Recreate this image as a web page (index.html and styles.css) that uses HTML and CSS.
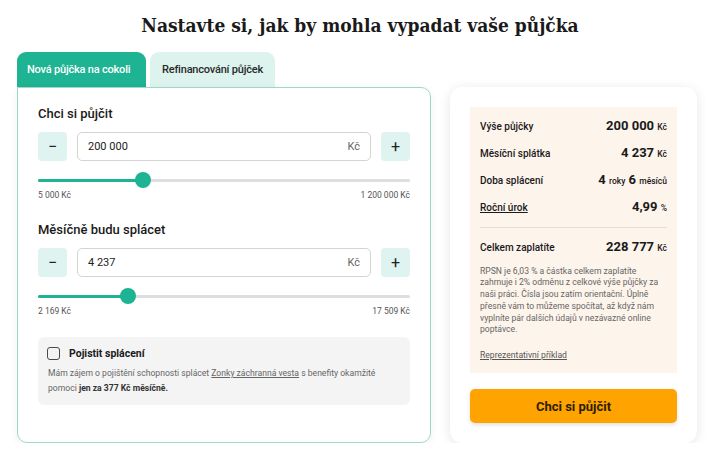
FILE: index.html
```html
<!DOCTYPE html>
<html lang="cs">
<head>
<meta charset="utf-8">
<title>Kalkulačka půjčky</title>
<link rel="stylesheet" href="styles.css">
</head>
<body>
<h1 class="title">Nastavte si, jak by mohla vypadat vaše půjčka</h1>
<div class="layout">
  <div class="tabs">
    <div class="tab tab-active">Nová půjčka na cokoli</div>
    <div class="tab">Refinancování půjček</div>
  </div>
  <div class="calc">
    <div class="field">
      <div class="field-label">Chci si půjčit</div>
      <div class="controls">
        <button class="step">&minus;</button>
        <div class="input"><span>200 000</span><span class="unit">Kč</span></div>
        <button class="step">+</button>
      </div>
      <div class="slider"><div class="track"><div class="fill" style="width:28.3%"></div><div class="thumb" style="left:28.3%"></div></div></div>
      <div class="range"><span>5 000 Kč</span><span>1 200 000 Kč</span></div>
    </div>
    <div class="field">
      <div class="field-label">Měsíčně budu splácet</div>
      <div class="controls">
        <button class="step">&minus;</button>
        <div class="input"><span>4 237</span><span class="unit">Kč</span></div>
        <button class="step">+</button>
      </div>
      <div class="slider"><div class="track"><div class="fill" style="width:24.3%"></div><div class="thumb" style="left:24.3%"></div></div></div>
      <div class="range"><span>2 169 Kč</span><span>17 509 Kč</span></div>
    </div>
    <div class="insure">
      <div class="insure-head"><span class="check"></span><span class="insure-title">Pojistit splácení</span></div>
      <p class="insure-text">Mám zájem o pojištění schopnosti splácet <a href="#">Zonky záchranná vesta</a> s benefity okamžité<br>pomoci <b>jen za 377 Kč měsíčně.</b></p>
    </div>
  </div>
  <div class="summary">
    <div class="sum-box">
      <div class="row"><span class="lbl">Výše půjčky</span><span class="val">200 000 <small>Kč</small></span></div>
      <div class="row"><span class="lbl">Měsíční splátka</span><span class="val">4 237 <small>Kč</small></span></div>
      <div class="row"><span class="lbl">Doba splácení</span><span class="val">4 <small>roky</small> 6 <small>měsíců</small></span></div>
      <div class="row"><span class="lbl lbl-link">Roční úrok</span><span class="val">4,99 <small>%</small></span></div>
      <div class="divider"></div>
      <div class="row"><span class="lbl">Celkem zaplatíte</span><span class="val">228 777 <small>Kč</small></span></div>
      <p class="note">RPSN je 6,03 % a částka celkem zaplatíte zahrnuje i 2% odměnu z celkové výše půjčky za naši práci. Čísla jsou zatím orientační. Úplně přesně vám to můžeme spočítat, až když nám vyplníte pár dalších údajů v nezávazné online poptávce.</p>
      <a class="example" href="#">Reprezentativní příklad</a>
    </div>
    <button class="cta">Chci si půjčit</button>
  </div>
</div>
</body>
</html>
```
FILE: styles.css
```css
* { box-sizing: border-box; }
body {
  margin: 0;
  background: #fff;
  font-family: Roboto, "Noto Sans", sans-serif;
  color: #1e1e1e;
}
.title {
  margin: 10px 0 12px;
  text-align: center;
  font-family: "DejaVu Serif Condensed", "DejaVu Serif", serif;
  font-stretch: condensed;
  font-weight: 700;
  font-size: 19px;
  line-height: 30px;
  color: #1a1a1a;
}
.layout {
  display: grid;
  grid-template-columns: 414px 247px;
  grid-template-rows: 35px 356px;
  column-gap: 19px;
  padding-left: 17px;
}
.tabs { display: flex; gap: 4px; align-items: flex-end; }
.tab {
  height: 35px;
  padding: 0 12px;
  display: flex;
  align-items: center;
  font-size: 11px;
  font-weight: 500;
  letter-spacing: -0.2px;
  border-radius: 9px 9px 0 0;
  background: #dcf3ee;
  color: #2a2a2a;
}
.tab-active { background: #1db393; color: #fff; width: 129px; padding: 0 10px; }
.calc {
  grid-column: 1; grid-row: 2;
  border: 1px solid #9fd8c9;
  border-radius: 0 10px 10px 10px;
  box-shadow: 0 2px 8px rgba(0,0,0,0.06);
  padding: 17px 20px;
}
.field { margin-bottom: 20px; }
.field-label { font-size: 13px; font-weight: 500; line-height: 18px; margin-bottom: 9px; color: #1a1a1a; }
.controls { display: flex; gap: 10px; height: 29px; }
.step {
  width: 29px; height: 29px; border: none; border-radius: 4px;
  background: #dff3f0; color: #222; font-size: 16px; font-family: Roboto, sans-serif;
  padding: 0; line-height: 29px;
}
.input {
  flex: 1; display: flex; justify-content: space-between; align-items: center;
  border: 1px solid #d4d4d4; border-radius: 5px; padding: 0 10px;
  font-size: 11px; color: #222;
}
.unit { color: #666; }
.slider { height: 16px; margin-top: 11px; display: flex; align-items: center; }
.track { position: relative; width: 100%; height: 3px; background: #dedede; border-radius: 2px; }
.fill { height: 3px; background: #1db393; border-radius: 2px; }
.thumb {
  position: absolute; top: -6.5px; width: 16px; height: 16px; margin-left: -8px;
  border-radius: 50%; background: #1db393;
}
.range { display: flex; justify-content: space-between; font-size: 8.5px; line-height: 12px; margin-top: 1px; color: #555; }
.insure { background: #f4f4f4; border-radius: 6px; padding: 10px 10px 9px; }
.insure-head { display: flex; align-items: center; gap: 9px; }
.check { width: 13px; height: 13px; border: 1.6px solid #4a4a4a; border-radius: 3px; margin-left: -1px; }
.insure-title { font-size: 10.5px; font-weight: 700; color: #1a1a1a; }
.insure-text { margin: 6px 0 0; font-size: 8.6px; line-height: 15px; color: #666; }
.insure-text a { color: #666; }
.insure-text b { color: #333; }
.summary {
  grid-column: 2; grid-row: 2;
  background: #fff; border-radius: 12px;
  box-shadow: 0 2px 12px rgba(0,0,0,0.10);
  padding: 20px;
  display: flex; flex-direction: column;
}
.sum-box { background: #fdf4ec; padding: 10px 10px 12px; height: 266px; display: flex; flex-direction: column; }
.row { display: flex; justify-content: space-between; align-items: baseline; height: 18px; line-height: 18px; margin-bottom: 9px; }
.lbl { font-size: 10px; font-weight: 500; color: #1a1a1a; }
.lbl-link { text-decoration: underline; }
.val { font-size: 13px; font-weight: 700; color: #1a1a1a; }
.val small { font-size: 8.5px; font-weight: 500; }
.divider { height: 1px; background: #e6ddd4; margin: 2px 0 10px; }
.note { margin: 1px 0 0; font-size: 8.6px; line-height: 11.7px; color: #666; }
.example { margin-top: 13px; font-size: 8.6px; line-height: 12px; color: #555; }
.cta {
  margin-top: 16px; height: 34px; border: none; border-radius: 5px;
  background: #ffa300; color: #2b1d00; font-family: Roboto, sans-serif;
  font-size: 13px; font-weight: 700;
  box-shadow: 0 2px 4px rgba(0,0,0,0.12);
}
```
